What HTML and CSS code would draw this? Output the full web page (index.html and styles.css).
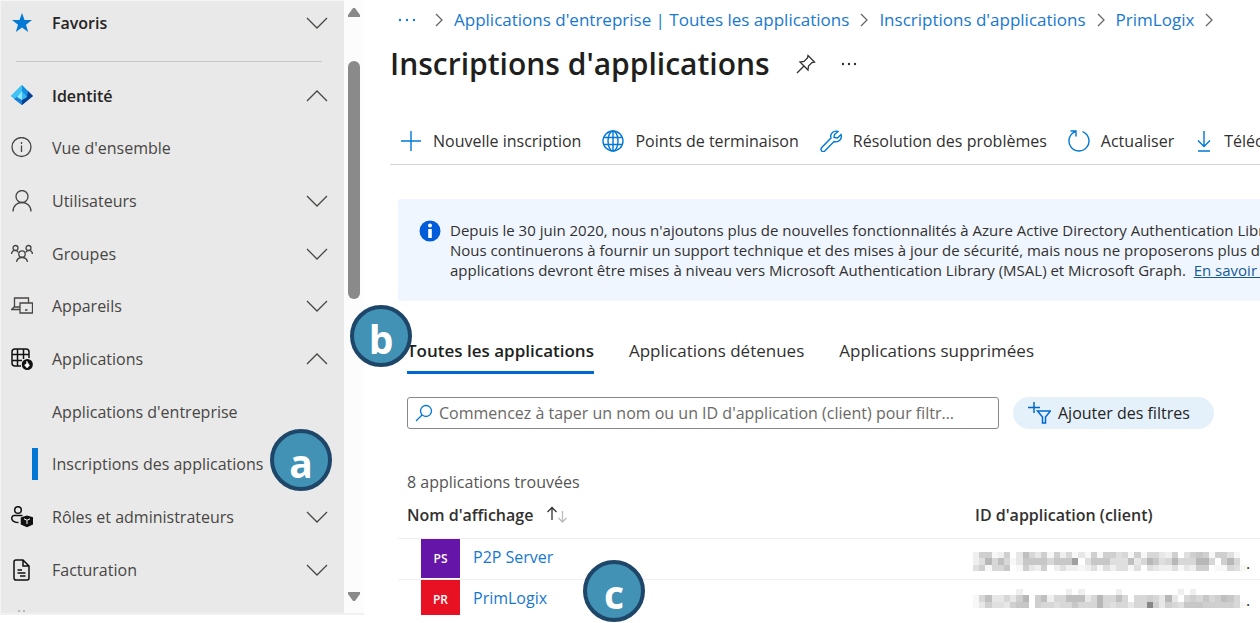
FILE: index.html
```html
<!DOCTYPE html>
<html lang="fr">
<head>
<meta charset="utf-8">
<title>Inscriptions d'applications</title>
<link rel="stylesheet" href="styles.css">
</head>
<body>
<svg class="sprite" aria-hidden="true">
  <symbol id="down" viewBox="0 0 22 12"><path d="M1 1l10 10L21 1"/></symbol>
  <symbol id="up" viewBox="0 0 22 12"><path d="M1 11L11 1l10 10"/></symbol>
  <symbol id="right" viewBox="0 0 8 14"><path d="M1 1l6 6-6 6"/></symbol>
</svg>
<div class="app">
  <aside class="side">
    <nav class="menu">
      <button class="item head"><svg class="ico" viewBox="0 0 22 22"><path fill="#0078d4" d="M11 1l2.500 7H21l-6 4.700 2.200 7.300-6.200-4.400L4.800 20 7 12.700 1 8h7.500z"/></svg><span>Favoris</span><svg class="chev"><use href="#down"/></svg></button>
      <hr class="rule">
      <button class="item head"><svg class="ico" viewBox="0 0 22 22"><path fill="#1490df" d="M11 0l11 11-11 9L0 11z"/><path fill="#3fc4f5" d="M11 0L0 11l4 3 7-8z"/><path fill="#0b3f91" d="M17 6l5 5-11 9v-5l5-3z"/><path fill="#1c7fd6" d="M11 15v5l-8-6 3-2z"/><path fill="#8be8ff" d="M11 6v9l-5-3z"/><path fill="#38b6f1" d="M11 6l5 6-5 3z"/></svg><span>Identité</span><svg class="chev"><use href="#up"/></svg></button>
      <div class="list">
        <a class="item" href="#"><svg class="ico line" viewBox="0 0 22 22"><circle cx="10.500" cy="10" r="9.500"/><path d="M10.500 8.500V15M10.500 5v2"/></svg><span>Vue d'ensemble</span></a>
        <button class="item"><svg class="ico line" viewBox="0 0 22 22"><circle cx="11" cy="6.500" r="6"/><path d="M2 21.500c0-12 18-12 18 0"/></svg><span>Utilisateurs</span><svg class="chev"><use href="#down"/></svg></button>
        <button class="item"><svg class="ico line" viewBox="0 0 22 22"><circle cx="11" cy="11" r="3.200"/><circle cx="4.500" cy="5" r="2.500"/><circle cx="17.500" cy="5" r="2.500"/><path d="M5.500 19c1-6 10-6 11 0M.5 11c.3-4.500 5-4.500 7-1.500M21.500 11c-.3-4.500-5-4.500-7-1.500"/></svg><span>Groupes</span><svg class="chev"><use href="#down"/></svg></button>
        <button class="item"><svg class="ico line" viewBox="0 0 22 22"><path d="M3.500 12V3h14v5M9 12H3L.7 14.500h8.300M9 8h12.500v10H9zM14 15h2.500"/></svg><span>Appareils</span><svg class="chev"><use href="#down"/></svg></button>
        <button class="item"><svg class="ico dark" viewBox="0 0 22 22"><path d="M10 18H4c-2 0-3-1-3-3V4c0-2 1-3 3-3h11c2 0 3 1 3 3v6M6.500 1v17M12.500 1v10M1 6.500h17M1 12.500h10"/><circle cx="16.300" cy="16.500" r="4.800" fill="#111"/><path d="M16 20l-2.500-3 2-1.200.2-2.800 1.200 2 1.600 2.500z" stroke="#fff" fill="#fff" stroke-width=".5"/></svg><span>Applications</span><svg class="chev"><use href="#up"/></svg></button>
        <a class="item sub" href="#"><span>Applications d'entreprise</span></a>
        <a class="item sub current" href="#"><span>Inscriptions des applications</span></a>
        <button class="item"><svg class="ico dark" viewBox="0 0 22 22"><circle cx="7" cy="4" r="3.300"/><path d="M11.500 9.500H3C-.5 10-.5 16.500 7.500 16.500"/><path fill="#111" d="M10.500 12l5.500-1.700 5.500 1.700v6L16 20.500 10.500 18z"/><path d="M13 12.800l3 1.500 3-1.500M16 14.500V18" stroke="#fff" stroke-width="1"/></svg><span>Rôles et administrateurs</span><svg class="chev"><use href="#down"/></svg></button>
        <button class="item"><svg class="ico dark" viewBox="0 0 22 22"><path d="M5 1h7l6 6v12c0 1-.7 2-2 2H5c-1.300 0-2-1-2-2V3c0-1 .7-2 2-2zM12 1v6h6M6.500 11H11M6.500 14h8M9 17h5.500"/></svg><span>Facturation</span><svg class="chev"><use href="#down"/></svg></button>
      </div>
      <svg class="clipped" viewBox="0 0 22 4"><path d="M7 2h2M12 2h2"/></svg>
    </nav>
    <div class="scroll" aria-hidden="true">
      <svg class="arrow" viewBox="0 0 12 10"><path d="M5 1h2l5 7v2H0V8z"/></svg>
      <div class="thumb"></div>
      <svg class="arrow" viewBox="0 0 12 10"><path d="M0 0h12v2L7 9H5L0 2z"/></svg>
    </div>
  </aside>

  <main class="main">
    <nav class="crumbs" aria-label="Fil d'Ariane">
      <a class="more" href="#" aria-label="Plus"><svg viewBox="0 0 18 4"><circle cx="2" cy="2" r="1.200"/><circle cx="9" cy="2" r="1.200"/><circle cx="16" cy="2" r="1.200"/></svg></a>
      <svg class="sep"><use href="#right"/></svg>
      <a href="#">Applications d'entreprise | Toutes les applications</a>
      <svg class="sep"><use href="#right"/></svg>
      <a href="#">Inscriptions d'applications</a>
      <svg class="sep"><use href="#right"/></svg>
      <a href="#">PrimLogix</a>
      <svg class="sep"><use href="#right"/></svg>
    </nav>
    <header class="title">
      <h1>Inscriptions d'applications</h1>
      <button class="pin" aria-label="Épingler"><svg viewBox="0 0 20 20"><path d="M12 1.500l6.500 6.500-2.500.5-3.500 3.500-.5 4-8-8 4-.5L11.500 4zM8 12l-7 7"/></svg></button>
      <button class="dots" aria-label="Autres actions"><svg viewBox="0 0 16 4"><circle cx="2" cy="2" r="1.200"/><circle cx="8" cy="2" r="1.200"/><circle cx="14" cy="2" r="1.200"/></svg></button>
    </header>
    <div class="tools">
      <button><svg viewBox="0 0 22 22"><path d="M11 1v20M1 11h20"/></svg>Nouvelle inscription</button>
      <button><svg viewBox="0 0 22 22"><circle cx="11" cy="11" r="10"/><ellipse cx="11" cy="11" rx="5" ry="10"/><path d="M2 7.500h18M2 14.500h18M11 1v20"/></svg>Points de terminaison</button>
      <button><svg viewBox="0 0 22 22"><path d="M18 1.500c-4-1.500-8.500 2-7 6.500L1.700 17.500c-2 2.500 1 5.500 3.300 3.300L14 11.500c4.500 1.500 8.500-2.500 7-7L17.500 8 14 7.500l.5-3z"/></svg>Résolution des problèmes</button>
      <button><svg viewBox="0 0 22 22"><path d="M2.500 1H8v5.500M8 1.400A10 10 0 1 0 14.500 1.600"/></svg>Actualiser</button>
      <button><svg class="narrow" viewBox="0 0 18 22"><path d="M9 1v15M3 10.500l6 6 6-6M3 21h12"/></svg>Télécharger</button>
    </div>
    <section class="notice">
      <svg viewBox="0 0 22 22"><circle cx="11" cy="11" r="10.500" fill="#015cda"/><circle cx="11" cy="5.500" r="2" fill="#fff"/><path d="M9.200 9h3.600v9H9.200z" fill="#fff"/></svg>
      <p>Depuis le 30 juin 2020, nous n'ajoutons plus de nouvelles fonctionnalités à Azure Active Directory Authentication Library<br>Nous continuerons à fournir un support technique et des mises à jour de sécurité, mais nous ne proposerons plus de<br>applications devront être mises à niveau vers Microsoft Authentication Library (MSAL) et Microsoft Graph.&nbsp; <a href="#">En savoir plus</a></p>
    </section>
    <div class="content">
      <div class="tabs" role="tablist">
        <button role="tab" aria-selected="true">Toutes les applications</button>
        <button role="tab" aria-selected="false">Applications détenues</button>
        <button role="tab" aria-selected="false">Applications supprimées</button>
      </div>
      <div class="filters">
        <label class="search"><svg viewBox="0 0 18 18"><circle cx="11" cy="7" r="5.500"/><path d="M7 11l-6 6"/></svg><input type="text" aria-label="Rechercher" placeholder="Commencez à taper un nom ou un ID d'application (client) pour filtr…"></label>
        <button class="add"><svg viewBox="0 0 24 24"><path d="M7 1v11M1 6.500h12M10.500 10h13l-5 6v6h-3v-6z"/></svg>Ajouter des filtres</button>
      </div>
      <p class="count">8 applications trouvées</p>
    </div>
    <table class="apps">
      <thead><tr>
        <th class="name" scope="col">Nom d'affichage <svg viewBox="0 0 22 18"><path d="M6 14V2M1.500 6L6 1.500 10.500 6"/><path stroke="#bbb" d="M16.500 5v11M12.500 12l4 4 4-4"/></svg></th>
        <th scope="col">ID d'application (client)</th>
      </tr></thead>
      <tbody>
        <tr><td><div class="cell"><span class="tile violet">PS</span><a href="#">P2P Server</a></div></td>
          <td><div class="masked"><svg data-rows="26612603853616251316166451615532604676166410,2495851377775777c047774448359745955599506950,46155701632602422124142441404322413266011541" viewBox="0 0 44 3"></svg><span>.</span></div></td></tr>
        <tr><td><div class="cell"><span class="tile red">PR</span><a href="#">PrimLogix</a></div></td>
          <td><div class="masked"><svg data-rows="00000002000000020200000200000000020200000000,15833536906825588835955850556539305657568750,1364436770655455755595455355f636547776666651" viewBox="0 0 44 3"></svg><span>.</span></div></td></tr>
      </tbody>
    </table>
  </main>
</div>
<span class="mark a">a</span><span class="mark b">b</span><span class="mark c">c</span>
<script src="mask.js"></script>
</body>
</html>
```
FILE: styles.css
```css
* { box-sizing: border-box; }
body { margin: 0; min-height: 100vh; overflow: hidden; background: #fff; color: #323130; font: 16px/24px "Open Sans", "Noto Sans", sans-serif; }
button { border: 0; padding: 0; background: none; color: inherit; font: inherit; white-space: nowrap; }
a { color: #1878cf; text-decoration: none; }
svg { display: block; flex: none; fill: none; stroke: currentColor; }
.sprite { position: absolute; width: 0; height: 0; }
.app { display: flex; height: 100vh; }

.side { display: flex; flex: none; width: 364px; height: calc(100vh - 8px); border-bottom: 2px solid #f1f1f1; }
.menu { display: flex; flex-direction: column; width: 344px; overflow: hidden; border-left: 1px solid #f4f4f4; border-top: 1px solid #f6f6f6; background: #e9e9e9; color: #484644; }
.item { display: flex; align-items: center; width: 100%; padding: 0 16px 0 10px; color: inherit; text-align: left; }
.item span { margin-left: 19px; }
.item .chev { width: 22px; height: 12px; margin-left: auto; color: #484644; stroke-width: 1.3; }
.ico { width: 22px; height: 22px; stroke: none; }
.ico.line { stroke: #484644; stroke-width: 1.3; }
.ico.dark { stroke: #111; stroke-width: 1.5; }
.head { flex: none; height: 44px; color: #252423; font-weight: 600; }
.rule { flex: none; width: 306px; height: 1px; margin: 16px 0 12px 15px; border: 0; background: #c8c8c8; }
.list { display: flex; flex: 1; flex-direction: column; margin: 4px 0; }
.list .item { flex: 1; }
.sub { position: relative; padding-left: 32px; }
.current::before { content: ""; position: absolute; left: 31px; width: 6px; height: 32px; background: #0078d4; }
.clipped { flex: none; width: 22px; height: 4px; margin: 9px 0 0 10px; stroke: #888; stroke-width: 1; }
.scroll { display: flex; flex-direction: column; align-items: center; width: 20px; padding: 7px 0 11px; background: #fcfcfc; }
.scroll .arrow { width: 12px; height: 10px; fill: #8a8a8a; stroke: none; }
.thumb { width: 12px; height: 40%; margin: 44px 0 auto; border-radius: 6px; background: #8a8a8a; }

.main { display: flex; flex: 1; flex-direction: column; min-width: 0; padding-left: 26px; overflow: hidden; }
.crumbs { display: flex; align-items: center; gap: 11px; height: 40px; padding-left: 8px; font-size: 17px; white-space: nowrap; }
.crumbs .sep { width: 8px; height: 14px; color: #666; stroke-width: 1.3; }
.more { padding-right: 8px; }
.more svg { width: 18px; height: 4px; fill: currentColor; stroke: none; }
.title { display: flex; align-items: center; height: 48px; }
h1 { margin: 0; color: #201f1e; font-size: 30px; line-height: 40px; font-weight: 600; white-space: nowrap; }
.pin { margin-left: 26px; }
.pin svg { width: 20px; height: 20px; stroke-width: 1.3; }
.dots { margin-left: 25px; }
.dots svg { width: 16px; height: 4px; fill: currentColor; stroke: none; }
.tools { display: flex; gap: 21px; height: 53px; margin-top: 24px; padding: 6px 0 0 10px; border-bottom: 1px solid #d6d6d6; }
.tools button { display: flex; align-items: center; gap: 11px; height: 46px; }
.tools svg { width: 22px; height: 22px; color: #0078d4; stroke-width: 1.4; }
.tools .narrow { width: 18px; }
.notice { display: flex; gap: 9px; height: 102px; margin: 34px 0 0 8px; padding: 21px 0 0 21px; border-radius: 2px 0 0 2px; background: #eff6ff; }
.notice svg { width: 22px; height: 22px; stroke: none; }
.notice p { margin: 0; font-size: 15px; line-height: 20px; white-space: nowrap; }
.notice a { color: #155a94; text-decoration: underline; }
.content { padding-left: 17px; }
.tabs { display: flex; gap: 35px; padding-top: 32px; font-size: 17px; }
.tabs button { height: 41px; padding-bottom: 2px; border-bottom: 3px solid transparent; }
.tabs [aria-selected="true"] { border-color: #0067d0; color: #201f1e; font-weight: 600; }
.filters { display: flex; align-items: center; gap: 14px; margin-top: 23px; }
.search { display: flex; align-items: center; width: 592px; height: 32px; padding: 0 7px; border: 1px solid #8a8886; border-radius: 3px; }
.search svg { width: 18px; height: 18px; color: #0078d4; stroke-width: 1.3; }
.search input { flex: 1; min-width: 0; margin-left: 6px; padding: 0; border: 0; outline: 0; background: none; color: inherit; font: inherit; }
.search input::placeholder { color: #6b6967; opacity: 1; }
.add { display: flex; align-items: center; gap: 7px; height: 32px; padding: 0 24px 0 14px; border-radius: 16px; background: #e4f1fb; color: #252423; }
.add svg { width: 24px; height: 24px; color: #0067d0; stroke-width: 1.5; }
.count { margin: 41px 0 0; color: #555; }
.apps { width: 100%; border-collapse: collapse; table-layout: fixed; }
.apps th { height: 44px; padding: 0 0 3px; color: #323130; font-weight: 600; text-align: left; }
.apps .name { width: 585px; padding-left: 17px; }
.name svg { display: inline-block; width: 22px; height: 18px; margin-left: 8px; vertical-align: -3px; stroke-width: 1.3; }
.apps td { height: 41px; padding: 0; vertical-align: top; background: linear-gradient(#f0f0f0, #f0f0f0) 0 0 / 100% 1px no-repeat; }
.apps td:first-child { background-position: 8px 0; }
.cell { display: flex; gap: 13px; padding: 1px 0 0 31px; line-height: 36px; }
.tile { width: 39px; height: 39px; color: #fff; font-size: 12px; font-weight: 600; line-height: 40px; text-align: center; }
.violet { background: #6516a8; }
.red { height: 35px; background: #e81123; }
.masked { display: flex; align-items: flex-end; padding-top: 14px; margin-left: -2px; }
tr:last-child .masked { padding-top: 10px; }
.masked svg { width: 273px; height: 19px; stroke: none; }
.masked span { line-height: 16px; }
.mark { position: absolute; width: 62px; height: 62px; border: 4px solid #1e4668; border-radius: 50%; background: #4192b4; color: #fff; font-size: 39px; font-weight: 700; line-height: 60px; text-align: center; }
.a { left: 270px; top: 429px; }
.b { left: 350px; top: 305px; }
.c { left: 583px; top: 560px; }
```
FILE: mask.js
```js
// Draws the pixelated client identifiers: one hex digit of darkness per cell.
document.querySelectorAll("svg[data-rows]").forEach(function (svg) {
  svg.setAttribute("preserveAspectRatio", "none");
  svg.setAttribute("shape-rendering", "crispEdges");
  svg.dataset.rows.split(",").forEach(function (row, y) {
    row.split("").forEach(function (digit, x) {
      var rect = document.createElementNS("http://www.w3.org/2000/svg", "rect");
      var grey = 255 - parseInt(digit, 16) * 8;
      rect.setAttribute("x", x);
      rect.setAttribute("y", y);
      rect.setAttribute("width", 1);
      rect.setAttribute("height", 1);
      rect.setAttribute("fill", "rgb(" + grey + "," + grey + "," + grey + ")");
      svg.appendChild(rect);
    });
  });
});
```
